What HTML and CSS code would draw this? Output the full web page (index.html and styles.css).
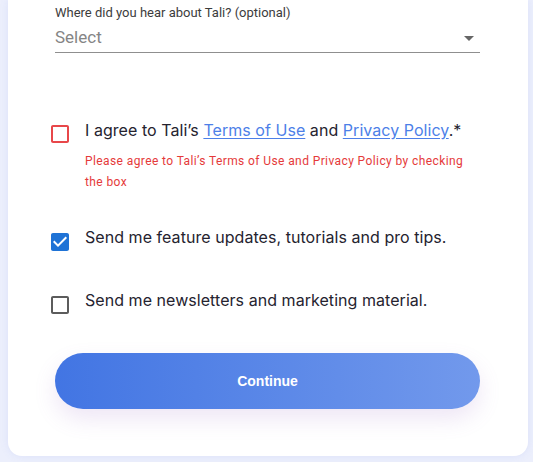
FILE: index.html
```html
<!DOCTYPE html>
<html lang="en">
<head>
<meta charset="utf-8">
<title>Sign up</title>
<link rel="stylesheet" href="styles.css">
</head>
<body>
<div class="card">
  <div class="field">
    <label class="field-label">Where did you hear about Tali? (optional)</label>
    <div class="select">
      <span class="placeholder">Select</span>
      <svg class="arrow" viewBox="0 0 24 24" width="24" height="24"><path d="M7 10l5 5 5-5z"/></svg>
    </div>
  </div>

  <div class="check-row row-terms">
    <svg class="cb" viewBox="0 0 24 24" width="24" height="24"><path class="cb-error" d="M19 5v14H5V5h14m0-2H5c-1.1 0-2 .9-2 2v14c0 1.1.9 2 2 2h14c1.1 0 2-.9 2-2V5c0-1.1-.9-2-2-2z"/></svg>
    <div class="check-text">
      <div class="label">I agree to Tali’s <a href="#">Terms of Use</a> and <a href="#">Privacy Policy</a>.*</div>
      <div class="error">Please agree to Tali’s Terms of Use and Privacy Policy by checking the box</div>
    </div>
  </div>

  <div class="check-row row-updates">
    <svg class="cb" viewBox="0 0 24 24" width="24" height="24"><path class="cb-checked" d="M19 3H5c-1.11 0-2 .9-2 2v14c0 1.1.89 2 2 2h14c1.11 0 2-.9 2-2V5c0-1.1-.89-2-2-2zm-9 14l-5-5 1.410-1.41L10 14.170l7.59-7.59L19 8l-9 9z"/></svg>
    <div class="check-text">
      <div class="label">Send me feature updates, tutorials and pro tips.</div>
    </div>
  </div>

  <div class="check-row row-news">
    <svg class="cb" viewBox="0 0 24 24" width="24" height="24"><path class="cb-off" d="M19 5v14H5V5h14m0-2H5c-1.1 0-2 .9-2 2v14c0 1.1.9 2 2 2h14c1.1 0 2-.9 2-2V5c0-1.1-.9-2-2-2z"/></svg>
    <div class="check-text">
      <div class="label">Send me newsletters and marketing material.</div>
    </div>
  </div>

  <button class="continue" type="button">Continue</button>
</div>
</body>
</html>
```

FILE: styles.css
```css
html, body {
  margin: 0;
  padding: 0;
}
body {
  background: #eceffc;
  height: 462px;
  overflow: hidden;
}
.card {
  background: #ffffff;
  margin: 0 5px 0 8px;
  border-radius: 0 0 14px 14px;
  padding: 5px 48px 47px 47px;
  box-shadow: 0 0 8px rgba(110, 130, 230, 0.12);
}
.field {
  display: flex;
  flex-direction: column;
}
.field-label {
  font-family: Roboto, "Liberation Sans", sans-serif;
  font-size: 13px;
  line-height: 16px;
  color: #3c3c3c;
}
.select {
  display: flex;
  align-items: center;
  justify-content: space-between;
  margin-top: 4px;
  height: 27px;
  border-bottom: 1px solid #8f8f8f;
}
.placeholder {
  font-family: Roboto, "Liberation Sans", sans-serif;
  font-size: 17px;
  color: #858585;
  padding-bottom: 4px;
}
.arrow {
  fill: rgba(0, 0, 0, 0.6);
  margin-right: -1px;
  margin-bottom: 2px;
}
.check-row {
  display: flex;
  align-items: flex-start;
}
.row-terms { margin-top: 65px; }
.row-updates { margin-top: 32px; }
.row-news { margin-top: 34px; }
.cb {
  flex: none;
  margin-left: -7px;
  margin-top: 4px;
}
.row-updates .cb, .row-news .cb { margin-top: 5px; }
.cb-error { fill: #e8474a; }
.cb-checked { fill: #1f73d6; }
.cb-off { fill: #5c5c5c; }
.check-text {
  margin-left: 13px;
}
.label {
  font-family: Inter, "Noto Sans", sans-serif;
  font-size: 16px;
  line-height: 24px;
  letter-spacing: 0.05px;
  color: #25232f;
}
.label a {
  color: #4d7fe8;
  text-decoration: underline;
  text-underline-offset: 2px;
}
.error {
  margin-top: 9px;
  font-family: Roboto, "Liberation Sans", sans-serif;
  font-size: 12px;
  line-height: 21px;
  letter-spacing: 0.4px;
  color: #e53a3a;
}
.continue {
  display: block;
  width: 100%;
  height: 56px;
  margin-top: 36px;
  border: 0;
  border-radius: 28px;
  background: linear-gradient(90deg, #4275e3 0%, #7299ec 100%);
  box-shadow: 0 10px 22px rgba(150, 100, 190, 0.16);
  color: #ffffff;
  font-family: "Liberation Sans", Arial, sans-serif;
  font-weight: bold;
  font-size: 14px;
  cursor: pointer;
}
```
